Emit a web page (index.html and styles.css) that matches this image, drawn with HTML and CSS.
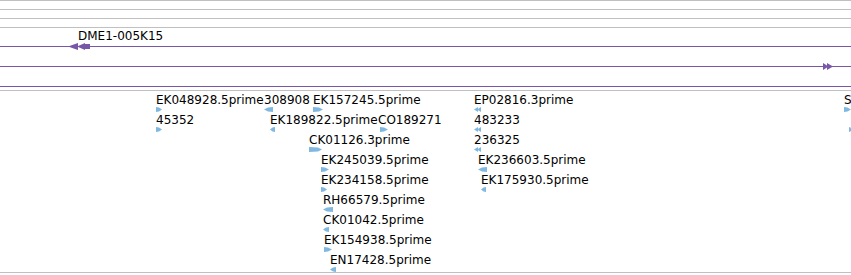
FILE: index.html
```html
<!DOCTYPE html>
<html>
<head>
    <title>Tracks</title>
    <link rel="stylesheet" href="styles.css">
</head>
<body>
    <div id="browser">
        <div class="rule"></div>
        <div class="rule"></div>
        <div class="rule"></div>
        <div class="rule rule-last"></div>

        <div id="clone-track" class="track">
            <div class="clone-label">DME1-005K15</div>
            <div class="clone-line">
                <svg class="clone-glyph glyph-left" width="22" height="7" viewBox="0 0 22 7">
                    <polygon points="0,3.5 10,0 10,7"/>
                    <polygon points="9,3.5 17,0 17,7"/>
                    <rect x="16" y="1" width="6" height="5"/>
                </svg>
            </div>
            <div class="clone-line">
                <svg class="clone-glyph glyph-right" width="10" height="7" viewBox="0 0 10 7">
                    <polygon points="0,0 5.5,3.5 0,7"/>
                    <polygon points="4,0 10,3.5 4,7"/>
                </svg>
            </div>
            <div class="clone-line"></div>
        </div>

        <div id="est-track" class="track"></div>
        <div class="rule rule-end"></div>
    </div>

    <script>
        // label, x, row, strand, glyph width, glyph offset
        const features = [
            ['EK048928.5prime', 156, 0, 'right', 6, 0],
            ['308908', 264, 0, 'left', 9, 0],
            ['EK157245.5prime', 313, 0, 'right', 10, 0],
            ['EP02816.3prime', 474, 0, 'left2', 7, 0],
            ['S', 844, 0, 'right', 7, 0],
            ['45352', 156, 1, 'right', 6, 0],
            ['EK189822.5prime', 270, 1, 'left', 5, 0],
            ['CO189271', 378, 1, 'right', 8, 2],
            ['483233', 474, 1, 'left2', 7, 0],
            ['', 849, 1, 'right', 3, 0],
            ['CK01126.3prime', 309, 2, 'right', 13, 0],
            ['236325', 474, 2, 'left2', 7, 0],
            ['EK245039.5prime', 321, 3, 'right', 8, 0],
            ['EK236603.5prime', 478, 3, 'left', 9, 0],
            ['EK234158.5prime', 321, 4, 'right', 6, 0],
            ['EK175930.5prime', 481, 4, 'left', 5, 0],
            ['RH66579.5prime', 323, 5, 'left', 10, 0],
            ['CK01042.5prime', 323, 6, 'left', 6, 0],
            ['EK154938.5prime', 324, 7, 'right', 8, 0],
            ['EN17428.5prime', 330, 8, 'left', 6, 0]
        ];

        function glyphSvg(strand, w) {
            const h = 5;
            const tip = Math.min(4, w / 2);
            let shape;
            if (strand === 'right') {
                shape = `<polygon points="0,0 ${w - tip},0.5 ${w},2.5 ${w - tip},4.5 0,5"/>`;
            } else if (strand === 'left') {
                shape = `<polygon points="${w},0 ${tip},0.5 0,2.5 ${tip},4.5 ${w},5"/>`;
            } else {
                shape = `<polygon points="0,2.5 4,0 4,5"/><polygon points="3,2.5 ${w},0 ${w},5"/>`;
            }
            return `<svg class="glyph" width="${w}" height="${h}" viewBox="0 0 ${w} ${h}">${shape}</svg>`;
        }

        const track = document.getElementById('est-track');
        features.forEach(function (f) {
            const el = document.createElement('div');
            el.className = 'feature';
            el.style.left = f[1] + 'px';
            el.style.top = (2 + f[2] * 20) + 'px';
            el.innerHTML = `<span class="label">${f[0] || '&nbsp;'}</span>` +
                `<span class="glyph-wrap" style="margin-left:${f[5]}px">${glyphSvg(f[3], f[4])}</span>`;
            track.appendChild(el);
        });
    </script>
</body>
</html>
```

FILE: styles.css
```css
body {
    margin: 0;
    padding: 0;
    background-color: #fff;
    font-family: "DejaVu Sans", Verdana, sans-serif;
    font-size: 12px;
    color: #000;
    overflow: hidden;
}

#browser {
    width: 851px;
}

.rule {
    height: 8px;
    border-top: 1px solid #c0c0c0;
}

.rule-last {
    height: 0;
}

.rule-end {
    height: 2px;
}

.track {
    position: relative;
}

#clone-track {
    border-bottom: 1px solid #c0c0c0;
    padding-bottom: 3px;
}

.clone-label {
    height: 18px;
    line-height: 14px;
    padding-left: 78px;
    padding-top: 1px;
    box-sizing: border-box;
}

.clone-line {
    position: relative;
    height: 19px;
    border-top: 1px solid #7856a8;
}

.clone-line:last-child {
    height: 0;
}

.clone-glyph {
    position: absolute;
    top: -4px;
    display: block;
    fill: #7856a8;
}

.glyph-left {
    left: 68px;
}

.glyph-right {
    left: 823px;
}

#est-track {
    height: 181px;
}

.feature {
    position: absolute;
    white-space: nowrap;
}

.label {
    display: block;
    line-height: 14px;
}

.glyph-wrap {
    display: block;
    margin-top: 0;
    height: 5px;
}

.glyph {
    display: block;
    fill: #80b8e0;
}
```
